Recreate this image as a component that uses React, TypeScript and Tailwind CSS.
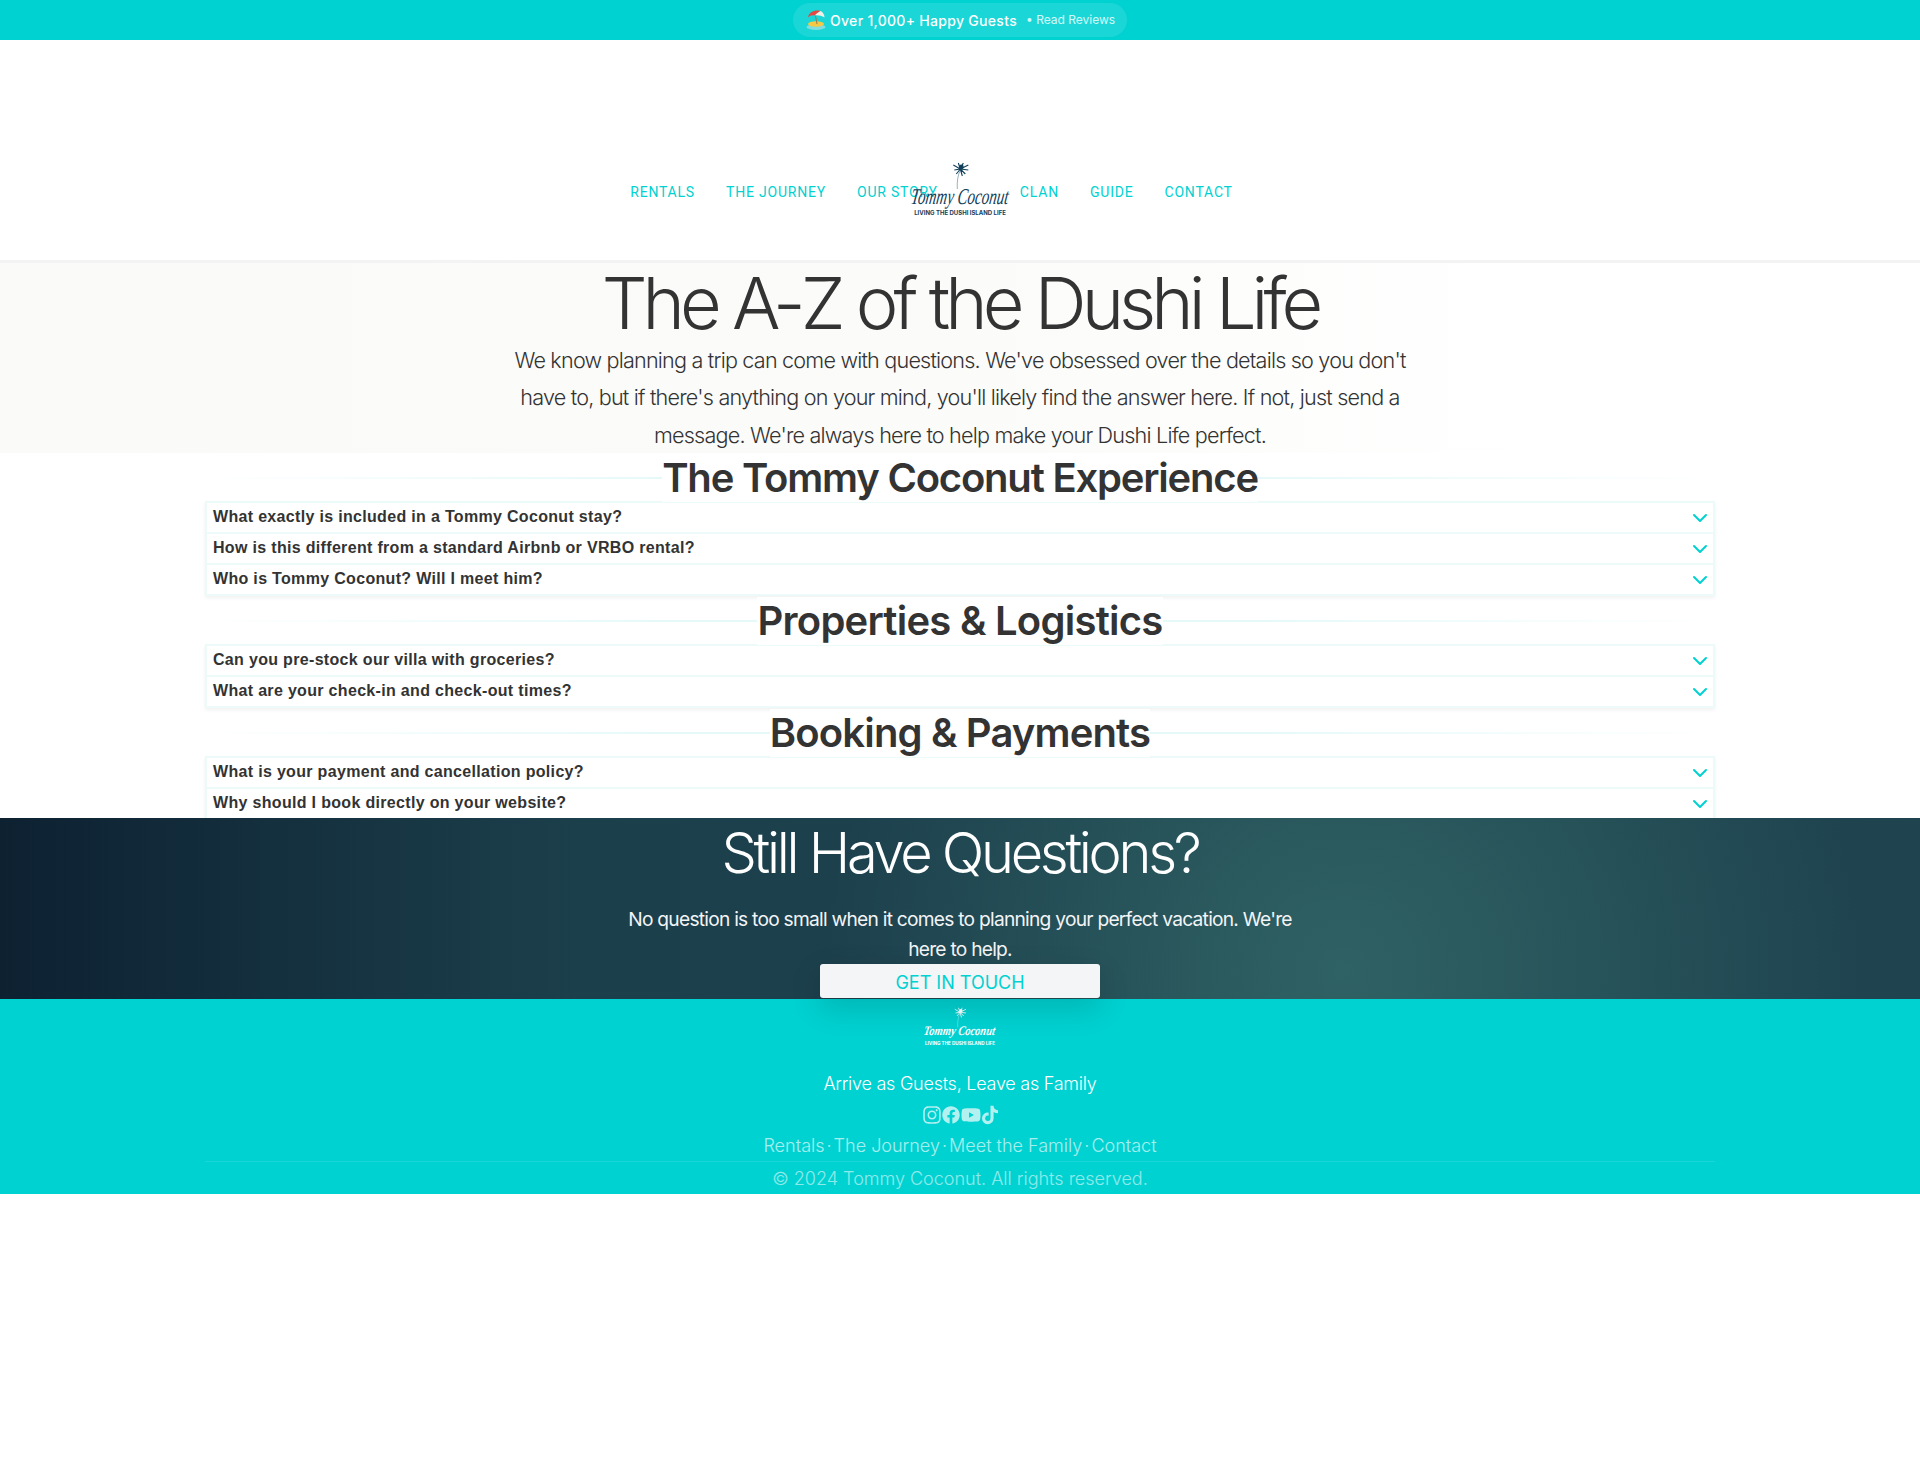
import React from "react";
import { ChevronDown } from "lucide-react";
import { FaFacebook, FaInstagram, FaTiktok, FaYoutube } from "react-icons/fa";

const navItems = ["RENTALS", "THE JOURNEY", "OUR STORY", "CLAN", "GUIDE", "CONTACT"];
const footerLinks = ["Rentals", "The Journey", "Meet the Family", "Contact"];

const sections = [
  {
    title: "The Tommy Coconut Experience",
    tracking: "tracking-[-1.2px]",
    questions: [
      "What exactly is included in a Tommy Coconut stay?",
      "How is this different from a standard Airbnb or VRBO rental?",
      "Who is Tommy Coconut? Will I meet him?",
    ],
  },
  {
    title: "Properties & Logistics",
    tracking: "tracking-[-0.75px]",
    questions: [
      "Can you pre-stock our villa with groceries?",
      "What are your check-in and check-out times?",
    ],
  },
  {
    title: "Booking & Payments",
    tracking: "tracking-[-0.85px]",
    questions: [
      "What is your payment and cancellation policy?",
      "Why should I book directly on your website?",
    ],
  },
];

const BeachIcon = () => (
  <svg viewBox="0 0 20 20" className="w-5 h-5 shrink-0">
    <ellipse cx="10" cy="17" rx="9.5" ry="3" fill="#7fdde0" />
    <ellipse cx="10" cy="14" rx="8" ry="2.8" fill="#f6c944" />
    <path d="M9 3 L11 14" stroke="#9b7a4a" strokeWidth="1" />
    <path d="M2 7.5 C3 2 9 -0.5 14.5 1 C12 2.5 10 4 8.5 5.5 C6 5 4 5.5 2 7.5Z" fill="#e5483f" />
    <path d="M8.5 5.5 C10 4 12 2.5 14.5 1 C17 2 18.5 5 18.5 7.5 C15.5 5.5 11.5 5 8.5 5.5Z" fill="#f4efe4" />
  </svg>
);

const Palm = ({ color, small }: { color: string; small?: boolean }) => (
  <svg
    viewBox="0 0 24 28"
    className={small ? "w-[18px] h-[21px]" : "w-[24px] h-[28px]"}
    fill="none"
    stroke={color}
    strokeWidth="1.1"
  >
    <path d="M9 27 C8.5 20 9.5 13 12 8" strokeWidth="0.6" opacity="0.7" />
    <path d="M12 7 L5 3 M12 7 L6 8 M12 7 L8 12 M12 7 L10 1 M12 7 L15 1 M12 7 L20 3 M12 7 L20 8 M12 7 L17 12 M12 7 L14 14" />
    <circle cx="13" cy="5" r="2.4" fill={color} stroke="none" />
  </svg>
);

const Logo = ({ color, small }: { color: string; small?: boolean }) => (
  <div className="flex flex-col items-center" style={{ color }}>
    <Palm color={color} small={small} />
    {small ? (
      <>
        <span className="font-['Liberation_Serif',serif] italic font-bold text-[10.5px] leading-[14px] -mt-[4px] -skew-x-12 scale-y-125 whitespace-nowrap">
          Tommy Coconut
        </span>
        <span className="font-['Inter',sans-serif] font-bold text-[4.6px] leading-[6px] mt-[3px] whitespace-nowrap">
          LIVING THE DUSHI ISLAND LIFE
        </span>
      </>
    ) : (
      <>
        <span className="font-['Liberation_Serif',serif] italic text-[15px] leading-[18px] -mt-[3px] -skew-x-12 scale-y-150 whitespace-nowrap">
          Tommy Coconut
        </span>
        <span className="font-['Inter',sans-serif] font-bold text-[6px] leading-[8px] mt-[4px] whitespace-nowrap">
          LIVING THE DUSHI ISLAND LIFE
        </span>
      </>
    )}
  </div>
);

const FaqSection = ({ title, tracking, questions }: { title: string; tracking: string; questions: string[] }) => (
  <section className="w-[1510px] mx-auto">
    <div className="h-[48px] flex justify-center bg-[linear-gradient(90deg,transparent,#e6f9f9_30%,#e6f9f9_70%,transparent)] bg-no-repeat bg-center bg-[length:100%_2px] relative">
      <h2 className={`bg-white text-[40px] leading-[48px] font-semibold text-[#333] ${tracking}`}>{title}</h2>
    </div>
    <div className="-mt-px mb-px border-x-2 border-t-2 border-[#ecfafa] shadow-[0_2px_4px_rgba(0,0,0,0.06)]">
      {questions.map((q) => (
        <div
          key={q}
          className="h-[31px] flex items-center justify-between pl-[6px] pr-[1px] pb-[2px] border-b-2 border-[#ecfafa] bg-white"
        >
          <span className="font-['Liberation_Sans',sans-serif] font-bold text-[16px] tracking-[0.32px] text-[#333]">{q}</span>
          <ChevronDown className="w-6 h-6 text-[#00d1d1] translate-y-[1px]" />
        </div>
      ))}
    </div>
  </section>
);

export default function App() {
  return (
    <div className="min-h-[1473px] bg-white font-['Inter',sans-serif] text-[#333]">
      <div className="h-10 bg-[#00d1d1] flex items-center justify-center">
        <div className="h-[34px] w-[334px] rounded-full bg-white/10 flex items-center pl-[13px] text-white">
          <BeachIcon />
          <span className="text-[14px] font-medium tracking-[0.3px] ml-[4px]">Over 1,000+ Happy Guests</span>
          <span className="text-[12px] text-white/80 ml-[9px]">• Read Reviews</span>
        </div>
      </div>

      <header className="relative h-[223px] bg-white border-b-[3px] border-[#f3f3f3]">
        <nav className="flex justify-center gap-[31px] pr-[57px] pt-[142px]">
          {navItems.map((item, i) => (
            <a
              key={item}
              className={`font-['Roboto',sans-serif] text-[14px] leading-5 tracking-[0.8px] text-[#00d1d1] ${i === 3 ? "ml-[51px]" : ""}`}
            >
              {item}
            </a>
          ))}
        </nav>
        <div className="absolute left-1/2 -translate-x-1/2 top-[122px]">
          <Logo color="#12405a" />
        </div>
      </header>

      <section className="h-[190px] text-center bg-[linear-gradient(90deg,#fafaf8,#fbfbf9_50%,#ffffff_80%)]">
        <h1 className="text-[72px] leading-[79px] font-light tracking-[-4.95px] text-[#333]">The A-Z of the Dushi Life</h1>
        <p className="w-[900px] mx-auto text-[21.6px] leading-[37.4px] font-light tracking-[-0.8px] text-[#333]">
          We know planning a trip can come with questions. We've obsessed over the details so you don't have to, but if
          there's anything on your mind, you'll likely find the answer here. If not, just send a message. We're always
          here to help make your Dushi Life perfect.
        </p>
      </section>

      <main className="h-[365px] pt-px">
        {sections.map((s) => (
          <FaqSection key={s.title} title={s.title} tracking={s.tracking} questions={s.questions} />
        ))}
      </main>

      <section className="relative z-0 h-[181px] text-center bg-[radial-gradient(circle_520px_at_70%_85%,#2f6264,transparent),linear-gradient(90deg,#0d2131,#1c3f4c_30%,#1f4450)]">
        <h2 className="text-[56px] leading-[70px] font-light text-white tracking-[-3.3px]">Still Have Questions?</h2>
        <p className="w-[700px] mx-auto mt-[16px] text-[19.2px] leading-[30px] tracking-[-0.75px] text-[#f3f4f6]">
          No question is too small when it comes to planning your perfect vacation. We're here to help.
        </p>
        <a className="block w-[280px] h-[34px] mx-auto rounded-[3px] bg-[#f3f5f6] text-[#00d1d1] text-[18px] leading-[37px] relative z-10 shadow-[0_10px_30px_rgba(0,0,0,0.15)]">
          GET IN TOUCH
        </a>
      </section>

      <footer className="h-[195px] bg-[#00d1d1] text-center text-white">
        <div className="flex justify-center pt-[8px] h-[70px]">
          <Logo color="#ffffff" small />
        </div>
        <p className="text-[18px] leading-[28px] font-light mt-[1px] tracking-[-0.25px]">Arrive as Guests, Leave as Family</p>
        <div className="flex justify-center items-center h-[20px] mt-[7px] text-white/70">
          <FaInstagram className="w-[20px] h-[20px]" />
          <FaFacebook className="w-[18px] h-[18px]" />
          <FaYoutube className="w-[20px] h-[20px] ml-[1px]" />
          <FaTiktok className="w-[16px] h-[20px] ml-[1px]" />
        </div>
        <div className="flex justify-center items-center gap-[2px] mt-[7px] text-[18px] leading-[28px] font-light text-white/65">
          {footerLinks.map((l, i) => (
            <React.Fragment key={l}>
              {i > 0 && <span>·</span>}
              <a>{l}</a>
            </React.Fragment>
          ))}
        </div>
        <div className="w-[1510px] mx-auto mt-[1px] border-t border-white/10 text-[18px] leading-[28px] font-light text-white/55 pt-[3px]">
          © 2024 Tommy Coconut. All rights reserved.
        </div>
      </footer>
    </div>
  );
}
